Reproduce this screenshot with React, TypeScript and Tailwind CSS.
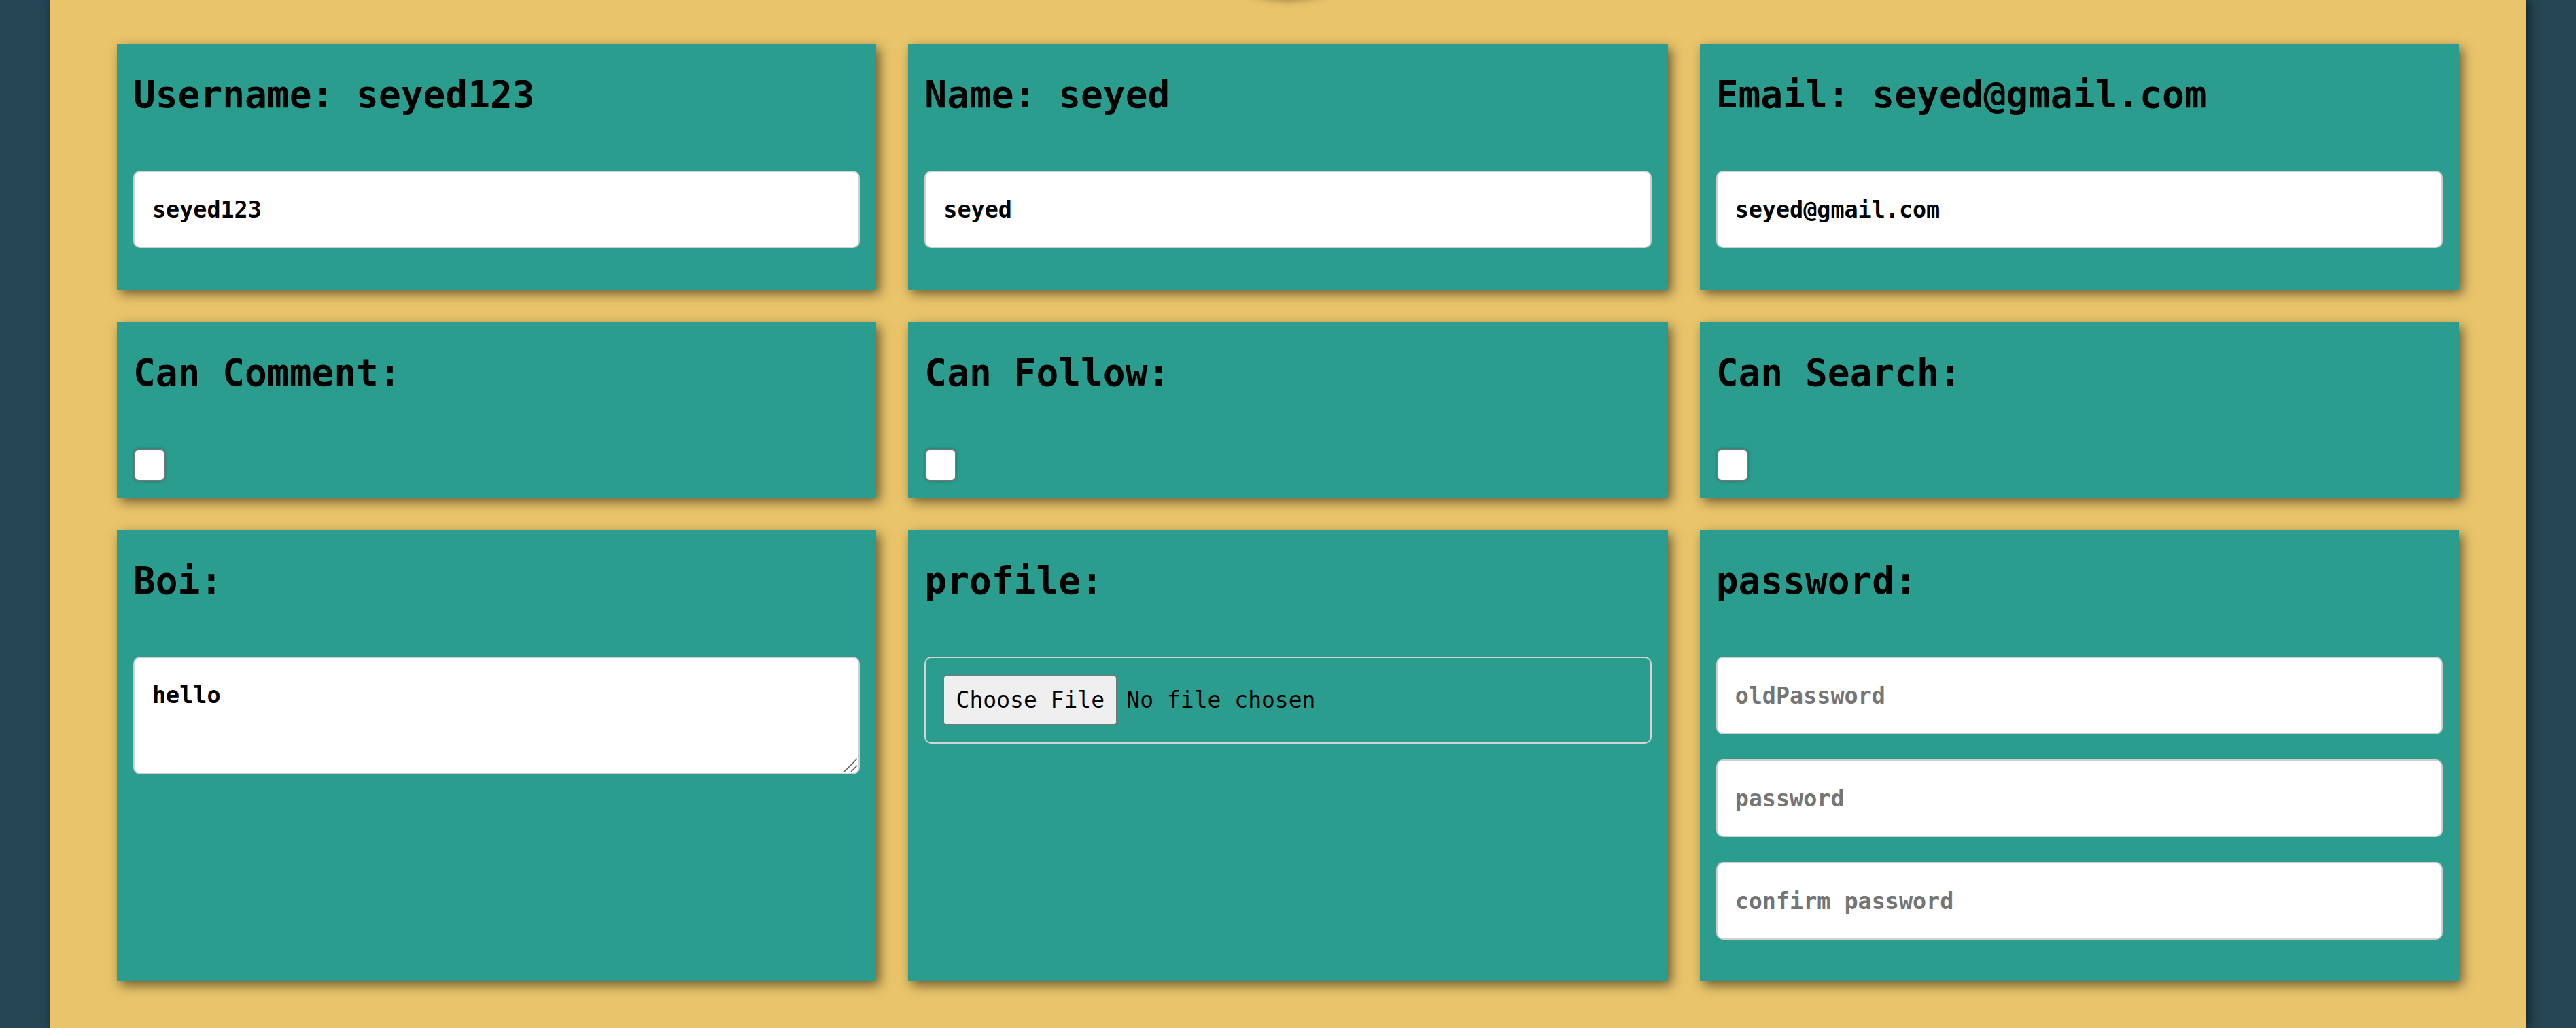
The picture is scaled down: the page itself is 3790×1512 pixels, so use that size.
import { useState } from "react";

function Card({ title, children }: { title: string; children?: React.ReactNode }) {
  return (
    <div className="bg-[#2a9d8f] px-[24px] pt-[42px] pb-[24px] shadow-[5px_6px_16px_rgba(0,0,0,0.55)]">
      <h2 className="text-[54.5px] leading-[64px] font-bold text-black mb-[80px] whitespace-nowrap">
        {title}
      </h2>
      {children}
    </div>
  );
}

const inputClass =
  "block w-full h-[114px] mb-[37px] px-[26px] bg-white border-2 border-[#cfcfcf] rounded-[10px] text-[33.4px] font-bold text-black placeholder:text-[#757575] outline-none";

function Check() {
  const [on, setOn] = useState(false);
  return (
    <input
      type="checkbox"
      checked={on}
      onChange={() => setOn(!on)}
      className="appearance-none block w-[46px] h-[48px] ml-[1px] bg-white border-2 border-[#767676] rounded-[7px] shadow-[0_0_4px_rgba(0,0,0,0.25)] checked:bg-[#0075ff]"
    />
  );
}

export default function App() {
  const [username, setUsername] = useState("seyed123");
  const [name, setName] = useState("seyed");
  const [email, setEmail] = useState("seyed@gmail.com");
  const [bio, setBio] = useState("hello");

  return (
    <div
      className="min-h-screen bg-[#264653] px-[73px]"
      style={{ fontFamily: '"DejaVu Sans Mono", "Liberation Mono", monospace' }}
    >
      <div className="relative overflow-hidden min-h-[1512px] bg-[#e9c46a] px-[99px] pt-[65px] pb-[69px] shadow-[4px_0_14px_rgba(0,0,0,0.55)]">
        {/* avatar above the fold, only its shadow shows */}
        <div className="absolute left-1/2 -translate-x-1/2 top-[-306px] w-[300px] h-[300px] rounded-full bg-[#e9c46a] shadow-[0_5px_14px_rgba(0,0,0,0.45)]" />

        <div className="grid grid-cols-3 gap-x-[47px] gap-y-[48px]">
          <Card title={`Username: ${username}`}>
            <input className={inputClass} value={username} onChange={(e) => setUsername(e.target.value)} />
          </Card>
          <Card title={`Name: ${name}`}>
            <input className={inputClass} value={name} onChange={(e) => setName(e.target.value)} />
          </Card>
          <Card title={`Email: ${email}`}>
            <input className={inputClass} value={email} onChange={(e) => setEmail(e.target.value)} />
          </Card>

          <Card title="Can Comment:">
            <Check />
          </Card>
          <Card title="Can Follow:">
            <Check />
          </Card>
          <Card title="Can Search:">
            <Check />
          </Card>

          <Card title="Boi:">
            <div className="relative">
              <textarea
                value={bio}
                onChange={(e) => setBio(e.target.value)}
                className="block w-full h-[173px] px-[26px] pt-[35px] resize-none bg-white border-2 border-[#cfcfcf] rounded-[10px] text-[33.4px] leading-[39px] font-bold text-black outline-none"
              />
              {/* resize grip */}
              <svg
                className="absolute right-[3px] bottom-[3px] w-[22px] h-[22px] pointer-events-none"
                viewBox="0 0 22 22"
              >
                <line x1="2" y1="21" x2="21" y2="2" stroke="#5a5a5a" strokeWidth="1.6" />
                <line x1="12" y1="21" x2="21" y2="12" stroke="#5a5a5a" strokeWidth="1.6" />
              </svg>
            </div>
          </Card>
          <Card title="profile:">
            <label className="flex items-center w-full h-[128px] px-[25px] border-2 border-[#d4d4d4] rounded-[10px] cursor-pointer">
              <input type="file" className="hidden" />
              <span className="flex items-center justify-center h-[74px] w-[257px] bg-[#efefef] border-2 border-[#767676] rounded-[5px] text-[33px] text-black">
                Choose File
              </span>
              <span className="ml-[13px] text-[33px] text-black">No file chosen</span>
            </label>
          </Card>
          <Card title="password:">
            <input type="password" placeholder="oldPassword" className={inputClass} />
            <input type="password" placeholder="password" className={inputClass} />
            <input type="password" placeholder="confirm password" className={inputClass} />
          </Card>
        </div>
      </div>
    </div>
  );
}
